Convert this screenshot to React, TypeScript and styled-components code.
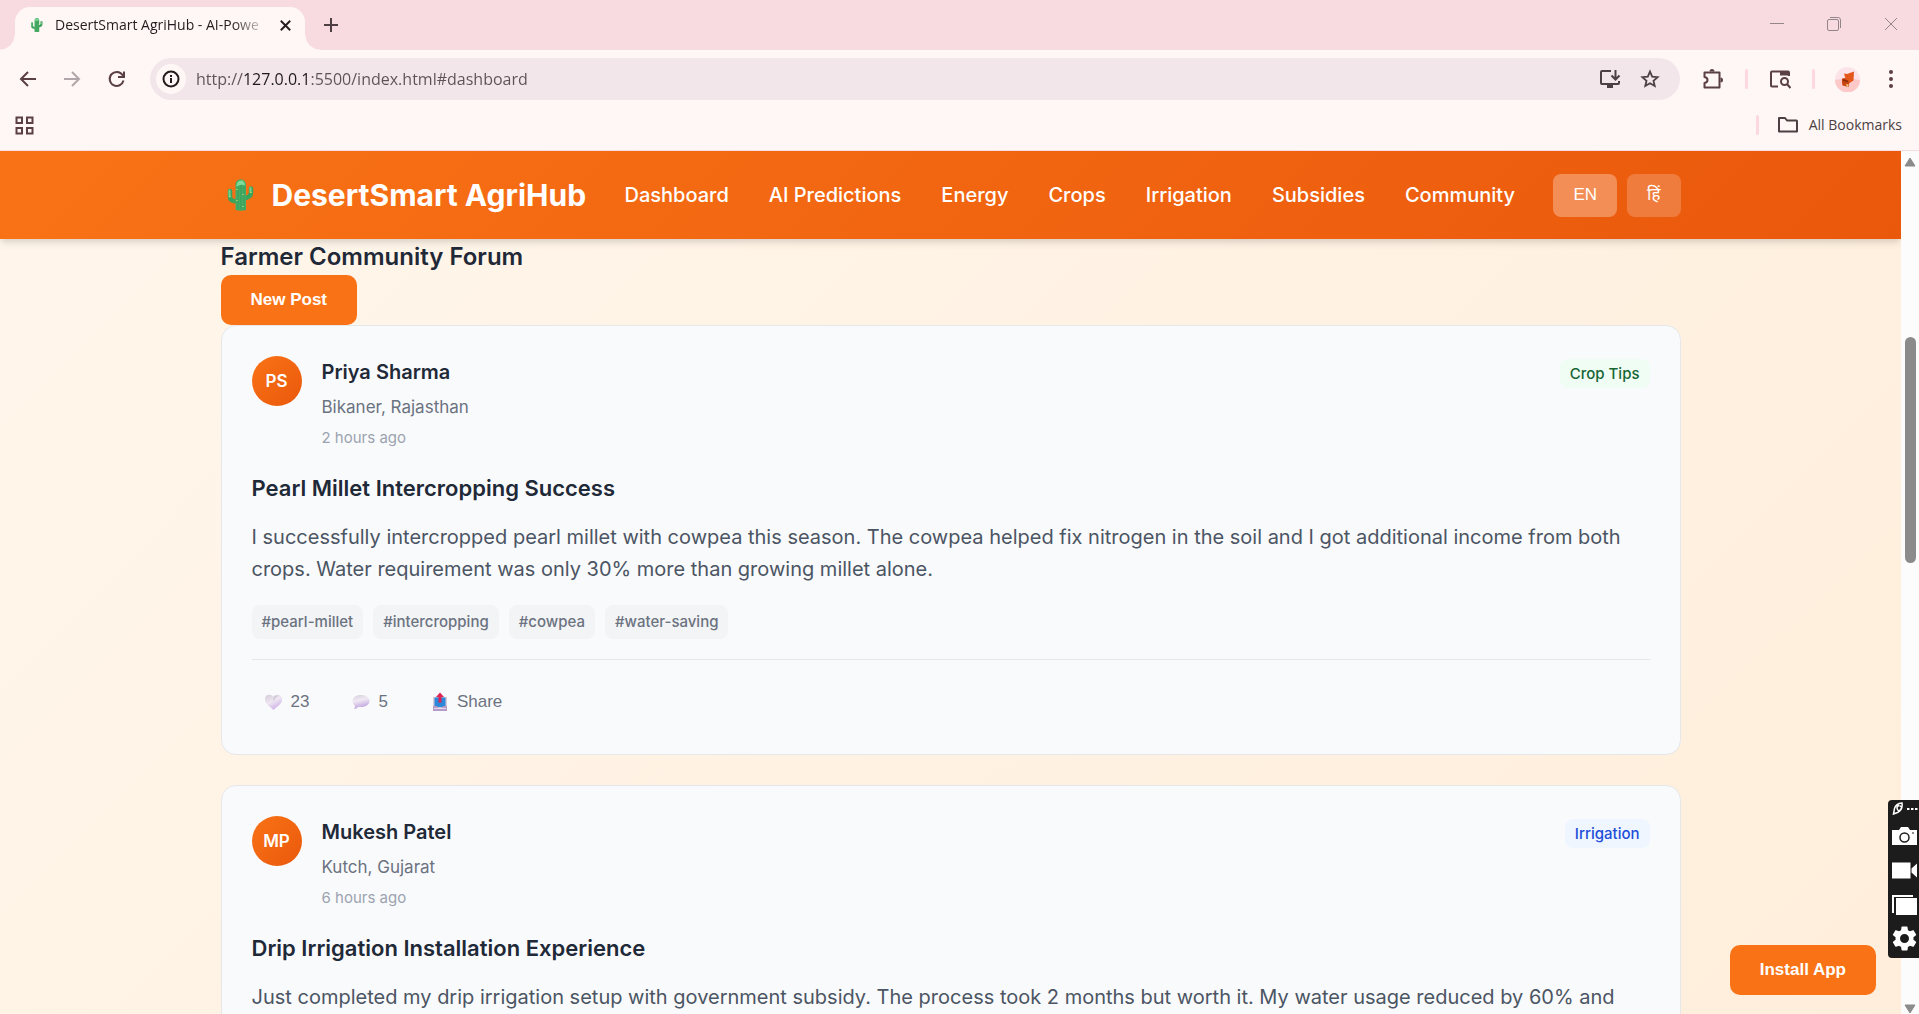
import React from "react";
import styled, { createGlobalStyle, css } from "styled-components";

const inter = `Inter, "Liberation Sans", sans-serif`;
const arial = `"Liberation Sans", Arial, "Noto Sans Devanagari", "Noto Sans", sans-serif`;
const ui = `"Open Sans", "Noto Sans", sans-serif`;

const GlobalStyle = createGlobalStyle`
  *, *::before, *::after { box-sizing: border-box; }
  body { margin: 0; overflow: hidden; font-family: ${inter}; }
  h1, h2, h3, p { margin: 0; }
  button { border: 0; cursor: pointer; }
  a { text-decoration: none; color: inherit; }
  svg { display: block; flex: none; }
`;

/* ---------- browser frame ---------- */

const Window = styled.div`
  display: flex;
  flex-direction: column;
  height: 100vh;
  background: #fff7f5;
`;

const TabStrip = styled.div`
  display: flex;
  align-items: flex-end;
  flex: none;
  height: 50px;
  padding-left: 15px;
  background: #f7dbe0;
`;

const Tab = styled.div`
  position: relative;
  display: flex;
  align-items: center;
  gap: 9px;
  width: 290px;
  height: 43px;
  padding: 0 8px 7px 13px;
  border-radius: 15px 15px 0 0;
  background: #fff7f5;

  &::before,
  &::after {
    content: "";
    position: absolute;
    bottom: 0;
    width: 15px;
    height: 15px;
  }
  &::before {
    right: 100%;
    background: radial-gradient(circle at 0 0, transparent 14px, #fff7f5 15px);
  }
  &::after {
    left: 100%;
    background: radial-gradient(circle at 100% 0, transparent 14px, #fff7f5 15px);
  }
`;

const TabTitle = styled.span`
  flex: 1;
  min-width: 0;
  overflow: hidden;
  white-space: nowrap;
  font: 14px/20px ${ui};
  color: #241b1e;
  mask-image: linear-gradient(90deg, #000 85%, transparent 102%);
`;

const PlainButton = styled.button<{ $w?: number; $h?: number; $color?: string }>`
  display: flex;
  align-items: center;
  justify-content: center;
  flex: none;
  width: ${(p) => p.$w ?? 44}px;
  height: ${(p) => p.$h ?? 42}px;
  padding: 0;
  background: none;
  color: ${(p) => p.$color ?? "#5a3f45"};
`;

const WindowControls = styled.div`
  display: flex;
  height: 50px;
  margin-left: auto;
`;

const Toolbar = styled.div`
  display: flex;
  align-items: center;
  flex: none;
  padding: 8px 6px;
`;

const Omnibox = styled.div`
  display: flex;
  align-items: center;
  flex: 1;
  height: 42px;
  margin: 0 11px 0 12px;
  padding: 0 10px 0 6px;
  border-radius: 21px;
  background: #f2e6eb;
`;

const SiteInfo = styled.button`
  display: flex;
  align-items: center;
  justify-content: center;
  width: 30px;
  height: 30px;
  padding: 0;
  border-radius: 50%;
  background: #fff7f5;
  color: #241b1e;
`;

const Address = styled.input`
  flex: 1;
  min-width: 0;
  margin-left: 10px;
  padding: 0;
  border: 0;
  outline: 0;
  font: 16px/24px ${ui};
  color: transparent;
  background: linear-gradient(90deg, #5f5156 47px, #1f1a1c 47px, #1f1a1c 112px, #5f5156 112px);
  background-clip: text;
`;

const Separator = styled.span`
  flex: none;
  width: 3px;
  height: 20px;
  margin: 0 10px;
  border-radius: 2px;
  background: #fdd8df;
`;

const Bookmarks = styled.div`
  display: flex;
  align-items: center;
  justify-content: space-between;
  flex: none;
  height: 43px;
  padding: 0 17px 8px 2px;
  border-bottom: 1px solid #f5dde1;
`;

const BookmarkGroup = styled.div`
  display: flex;
  align-items: center;
`;

const FolderButton = styled.button`
  display: flex;
  align-items: center;
  gap: 10px;
  padding: 0 0 0 8px;
  background: none;
  color: #4d3f43;
  font: 14px/20px ${ui};
`;

/* ---------- web page ---------- */

const Viewport = styled.div`
  display: flex;
  flex: 1;
  min-height: 0;
`;

const Page = styled.div`
  position: relative;
  flex: 1;
  min-width: 0;
  overflow: hidden;
  background: linear-gradient(135deg, #fff6eb, #ffeedb);
`;

const Container = styled.div`
  max-width: 1460px;
  margin: 0 auto;
`;

const Header = styled.header`
  position: relative;
  background: linear-gradient(135deg, #f97316, #ea580c);
  box-shadow: 0 5px 8px -1px rgba(0, 0, 0, 0.1), 0 3px 5px -1px rgba(0, 0, 0, 0.06);
`;

const HeaderInner = styled(Container)`
  display: flex;
  align-items: center;
  justify-content: space-between;
  height: 88px;
`;

const Brand = styled.h1`
  display: flex;
  align-items: center;
  gap: 11px;
  font: 700 30px/48px ${inter};
  color: #fff;
  white-space: nowrap;
`;

const Nav = styled.nav`
  display: flex;
  gap: 40px;
  font: 500 20px/32px ${inter};
  color: #fff;
  white-space: nowrap;
`;

const Languages = styled.div`
  display: flex;
  gap: 10px;
`;

const LangButton = styled.button<{ $active?: boolean }>`
  height: 43px;
  padding: 0 20px 1px;
  border-radius: 8px;
  background: rgba(255, 255, 255, ${(p) => (p.$active ? 0.3 : 0.2)});
  color: #fff;
  font: 17px/24px ${arial};
`;

const SectionTitle = styled.h2`
  font: 600 24px/36px ${inter};
  color: #1f2937;
`;

const primary = css`
  height: 50px;
  padding: 0 30px;
  border-radius: 10px;
  background: #f97316;
  color: #fff;
  font: 700 17px/20px ${arial};
  white-space: nowrap;
`;

const PrimaryButton = styled.button`
  display: block;
  ${primary}
`;

const InstallButton = styled.button`
  position: absolute;
  right: 25px;
  bottom: 19px;
  ${primary}
`;

const Posts = styled.div`
  display: flex;
  flex-direction: column;
  gap: 30px;
`;

const Card = styled.article`
  padding: 30px;
  border: 1px solid #e5e7eb;
  border-radius: 15px;
  background: #f9fafc;
`;

const PostHeader = styled.div`
  display: flex;
  align-items: flex-start;
  gap: 20px;
  margin-bottom: 20px;
`;

const Avatar = styled.div`
  display: flex;
  align-items: center;
  justify-content: center;
  flex: none;
  width: 50px;
  height: 50px;
  border-radius: 50%;
  background: linear-gradient(135deg, #f97316, #ea580c);
  color: #fff;
  font: 600 17px/24px ${inter};
`;

const Author = styled.div`
  display: flex;
  flex-direction: column;
  flex: 1;
  gap: 5px;
`;

const AuthorName = styled.h3`
  font: 600 20px/32px ${inter};
  color: #1f2937;
`;

const Place = styled.span`
  font: 17px/28px ${inter};
  color: #6b7280;
`;

const Time = styled.span`
  font: 15px/24px ${inter};
  color: #9ca3af;
`;

const BadgeLine = styled.div`
  display: flex;
  align-items: center;
  height: 35px;
`;

const Badge = styled.span<{ $bg: string; $color: string }>`
  padding: 3px 10px 2px;
  border-radius: 8px;
  background: ${(p) => p.$bg};
  color: ${(p) => p.$color};
  font: 500 15px/24px ${inter};
`;

const PostTitle = styled.h3`
  margin-bottom: 15px;
  font: 600 22px/36px ${inter};
  color: #1f2937;
`;

const PostText = styled.p`
  font: 20px/32px ${inter};
  color: #4b5563;
`;

const Tags = styled.div`
  display: flex;
  gap: 10px;
  margin: 20px 0;
`;

const Tag = styled.span`
  padding: 5px 10px;
  border-radius: 8px;
  background: #f3f4f6;
  color: #6b7280;
  font: 500 15px/24px ${inter};
`;

const Actions = styled.div`
  display: flex;
  gap: 20px;
  padding-top: 20px;
  border-top: 1px solid #e5e7eb;
`;

const ActionButton = styled.button`
  display: flex;
  align-items: center;
  gap: 5px;
  padding: 10px;
  background: none;
  color: #6b7280;
  font: 17px/24px ${arial};
`;

const Scrollbar = styled.div`
  display: flex;
  flex-direction: column;
  align-items: center;
  justify-content: space-between;
  width: 18px;
  padding: 6px 0 0;
  background: #fcfcfc;
`;

const Track = styled.div`
  flex: 1;
  width: 11px;
  padding-top: 170px;
`;

const Thumb = styled.div`
  height: 226px;
  border-radius: 6px;
  background: #8b8b8b;
`;

const CaptureBar = styled.div`
  position: fixed;
  right: 0;
  bottom: 56px;
  display: flex;
  flex-direction: column;
  align-items: center;
  gap: 9px;
  width: 31px;
  height: 158px;
  padding: 1px 0 0 2px;
  border-radius: 4px 0 0 4px;
  background: #1c1c1c;
`;

/* ---------- drawings ---------- */

const Cactus = ({ size }: { size: number }) => (
  <svg width={size} height={size} viewBox="2 0 40 40" aria-hidden="true">
    <path d="M11 16v6q0 4.500 8 4.500" fill="none" stroke="#3aa35c" strokeWidth="4.500" strokeLinecap="round" />
    <path d="M32 13.500v4q0 5-8 6" fill="none" stroke="#3aa35c" strokeWidth="4.500" strokeLinecap="round" />
    <path d="M10.500 15.500v6M31.500 13v4" fill="none" stroke="#74d08c" strokeWidth="2" strokeLinecap="round" />
    <path d="M16.500 35V9.500a5 5 0 0 1 10.500 0V35q-5 1.500-10.500 0z" fill="#46ad66" />
    <path d="M19 35V10M22 35V7M25 35V11" stroke="#2f9250" strokeWidth="1" opacity=".6" />
    <path d="M17.500 12q0-6.500 4.500-6.500 3.500 0 4 5-4.500-2-8.500 1.500z" fill="#7fdb95" />
    <path d="M18 14v1M24 19v1M18 25v1M24 31v1M11 21v1M32 17v1" stroke="#d0de70" strokeWidth="1.200" />
  </svg>
);

const stroke = { fill: "none", stroke: "currentColor" } as const;

const BackIcon = () => (
  <svg width="20" height="20" viewBox="0 0 20 20" {...stroke} strokeWidth="2"><path d="M18 10H3M10 3l-7 7 7 7" /></svg>
);
const ForwardIcon = () => (
  <svg width="20" height="20" viewBox="0 0 20 20" {...stroke} strokeWidth="2"><path d="M2 10h15M10 3l7 7-7 7" /></svg>
);
const ReloadIcon = () => (
  <svg width="20" height="20" viewBox="0 0 20 20" {...stroke} strokeWidth="2"><path d="M17.500 11.500A7 7 0 1 1 16.500 6L18 8M18 2.500V8h-6" /></svg>
);
const InfoIcon = () => (
  <svg width="18" height="18" viewBox="0 0 18 18" {...stroke} strokeWidth="2"><circle cx="9" cy="9" r="7.500" /><path d="M9 8v5M9 5v2" /></svg>
);
const InstallIcon = () => (
  <svg width="22" height="20" viewBox="0 0 22 20" {...stroke} strokeWidth="2"><path d="M12 2H3q-1 0-1 1v11q0 1 1 1h16q1 0 1-1v-2M16.500 1v9M12.500 6.500l4 4 4-4" /><path d="M8 17.500h6" strokeWidth="3" /></svg>
);
const StarIcon = () => (
  <svg width="20" height="20" viewBox="0 0 20 20" {...stroke} strokeWidth="1.800"><path d="M10 2.600l2.200 5 5.400.5-4.100 3.600 1.200 5.300L10 14.200 5.300 17l1.200-5.300L2.400 8.100l5.400-.5z" /></svg>
);
const PuzzleIcon = () => (
  <svg width="22" height="22" viewBox="0 0 22 22" {...stroke} strokeWidth="2">
    <path d="M2.500 4.500h15v15h-15v-4.500q3-.5 3-3t-3-3z" strokeLinejoin="round" />
    <path d="M7.500 3.500a2.500 2.500 0 0 1 5 0zM18.500 9.500a2.500 2.500 0 0 1 0 5z" fill="currentColor" stroke="none" />
  </svg>
);
const LensIcon = () => (
  <svg width="22" height="20" viewBox="0 0 22 20" {...stroke} strokeWidth="2">
    <path d="M9 17.500H3q-1 0-1-1V3.500q0-1 1-1h16q1 0 1 1V7" /><path d="M11 2h9v4.500h-9z" fill="currentColor" stroke="none" />
    <circle cx="15.500" cy="12.500" r="3.500" /><path d="M18 15l3.500 4" />
  </svg>
);
const ProfileIcon = () => (
  <svg width="25" height="25" viewBox="0 0 25 25">
    <circle cx="12.500" cy="12.500" r="12.500" fill="#fbe3e9" /><path d="M0 13q12-3 25 0a12.500 12.500 0 0 1-25 0z" fill="#fcc9c8" />
    <path d="M9 6.500l3 .5 7-2.500-.5 9-4 2.500-4-4z" fill="#e4561a" /><path d="M7 11.500l3-.5 4.500 4-1 5-6-1.500-.5-3z" fill="#c8440f" /><path d="M8 13l5 1.500" stroke="#8a2a0c" strokeWidth="1.500" /><path d="M10.500 17.500l3-.5-.5 3.500z" fill="#edc07a" />
  </svg>
);
const DotsIcon = () => (
  <svg width="6" height="20" viewBox="0 0 6 20" fill="currentColor"><circle cx="3" cy="3" r="2" /><circle cx="3" cy="10" r="2" /><circle cx="3" cy="17" r="2" /></svg>
);
const AppsIcon = () => (
  <svg width="19" height="19" viewBox="0 0 19 19" {...stroke} strokeWidth="2"><path d="M1.500 1.500h5.500v5.500h-5.500zM12 1.500h5.500v5.500h-5.500zM1.500 12h5.500v5.500h-5.500zM12 12h5.500v5.500h-5.500z" /></svg>
);
const FolderIcon = () => (
  <svg width="22" height="18" viewBox="0 0 22 18" {...stroke} strokeWidth="2" strokeLinejoin="round"><path d="M2 2h6l2 2.500h9.500q.5 0 .5.500v10.500H2z" /></svg>
);
const CrossIcon = ({ size, width }: { size: number; width: number }) => (
  <svg width={size} height={size} viewBox="0 0 14 14" {...stroke} strokeWidth={width}><path d="M1 1l12 12M13 1L1 13" /></svg>
);
const PlusIcon = () => (
  <svg width="14" height="14" viewBox="0 0 14 14" {...stroke} strokeWidth="2"><path d="M7 0v14M0 7h14" /></svg>
);
const MinimizeIcon = () => (
  <svg width="14" height="14" viewBox="0 0 14 14" {...stroke} strokeWidth="1"><path d="M0 6.500h14" /></svg>
);
const RestoreIcon = () => (
  <svg width="14" height="14" viewBox="0 0 14 14" {...stroke} strokeWidth="1"><rect x=".5" y="2.500" width="11" height="11" rx="1.500" /><path d="M3 .5h8q2.500 0 2.500 2.500v8" /></svg>
);

const HeartIcon = () => (
  <svg width="24" height="24" viewBox="0 0 24 24" aria-hidden="true">
    <defs>
      <linearGradient id="heart" x1="0" y1="0" x2=".6" y2="1"><stop offset="0" stopColor="#d3ccd8" /><stop offset=".5" stopColor="#efe8f3" /><stop offset="1" stopColor="#cdaee6" /></linearGradient>
    </defs>
    <path d="M11.500 7C10 4 3 3.500 3 9.500c0 5 6 7.500 8.500 10.500 2.500-3 8.500-5.500 8.500-10.500C20 3.500 13 4 11.500 7z" fill="url(#heart)" />
    <path d="M11.500 7c-.5 2-.5 3 0 5 1.500-4 3-5 5-6-2-.7-4-.5-5 1z" fill="#c5bccb" opacity=".6" />
  </svg>
);
const CommentIcon = () => (
  <svg width="24" height="24" viewBox="0 0 24 24" aria-hidden="true">
    <defs>
      <linearGradient id="bubble" x1="0" y1="0" x2=".3" y2="1"><stop offset="0" stopColor="#d5cdda" /><stop offset=".45" stopColor="#f1eaf4" /><stop offset="1" stopColor="#bfa3dc" /></linearGradient>
    </defs>
    <path d="M12 5c5 0 8.500 2.700 8.500 6S17 17 12 17q-1.500 0-2.800-.3Q8 19 5 19q1-1.300.9-3.500-2.400-1.500-2.400-4.500C3.500 7.700 7 5 12 5z" fill="url(#bubble)" />
  </svg>
);
const ShareIcon = () => (
  <svg width="24" height="24" viewBox="0 0 24 24" aria-hidden="true">
    <path d="M5 7h14v14H5z" fill="#d5cbdc" /><path d="M6.500 7.500h11V17h-11z" fill="#2b87d8" />
    <path d="M5 16h4q1 2 3 2t3-2h4v5H5z" fill="#b49bca" /><path d="M6 18h12v1H6z" fill="#e4d9ea" />
    <path d="M12 2.500l4 4.500h-2.500v5.500h-3V7H8z" fill="#de2452" />
  </svg>
);

const RocketIcon = () => (
  <svg width="26" height="14" viewBox="0 0 26 14" {...stroke} stroke="#fff">
    <path d="M1.500 13l1-5.500Q4 2.500 10 2 11 9 5.500 11.500zM7 4.500q-3 1-1.500 4T9.500 7M7.500 4.500l2 1.500" strokeWidth="1.500" />
    <path d="M15 8h2.500M19 8h2.500M23 8h2.500" strokeWidth="2" />
  </svg>
);
const CameraIcon = () => (
  <svg width="25" height="19" viewBox="0 0 25 19"><path d="M0 3h7l2-3h7l2 3h7v15H0z" fill="#fff" /><circle cx="12.500" cy="10.500" r="4.500" fill="#fff" stroke="#1c1c1c" strokeWidth="1.500" /><path d="M20 6h2" stroke="#1c1c1c" /></svg>
);
const VideoIcon = () => (
  <svg width="25" height="17" viewBox="0 0 25 17"><path d="M0 .5h18.500v16H0zM19.500 6.500L25 1.500v14l-5.500-5z" fill="#fff" /></svg>
);
const StackIcon = () => (
  <svg width="25" height="20" viewBox="0 0 25 20"><path d="M0 0h21v2H2v16H0z" fill="#fff" /><path d="M4 3h21v17H4z" fill="#fff" /></svg>
);
const GearIcon = () => (
  <svg width="25" height="25" viewBox="2 2 20 20" fill="#fff"><path d="M19.140 12.940c.04-.3.060-.61.060-.94s-.02-.64-.07-.94l2.030-1.580a.49.49 0 0 0 .12-.61l-1.920-3.320a.49.49 0 0 0-.59-.22l-2.390.96a7 7 0 0 0-1.620-.94l-.36-2.540a.48.48 0 0 0-.48-.41h-3.840a.48.48 0 0 0-.47.41l-.36 2.540a7.400 7.400 0 0 0-1.620.94l-2.390-.96a.48.48 0 0 0-.59.22L2.740 8.870a.48.48 0 0 0 .12.610l2.030 1.580a6 6 0 0 0 0 1.880l-2.030 1.580a.49.49 0 0 0-.12.610l1.920 3.320c.12.220.37.290.59.220l2.390-.96c.5.380 1.030.7 1.620.94l.36 2.540c.05.240.24.410.48.410h3.840c.24 0 .44-.17.470-.41l.36-2.540a7.400 7.400 0 0 0 1.620-.94l2.390.96c.22.080.47 0 .59-.22l1.920-3.320a.48.48 0 0 0-.12-.61zM12 15.600a3.600 3.600 0 1 1 0-7.200 3.600 3.600 0 0 1 0 7.200z" /></svg>
);
const Arrow = ({ down }: { down?: boolean }) => (
  <svg width="12" height="10" viewBox="0 0 12 10"><path d={down ? "M1 1h10L6 9z" : "M1 9h10L6 1z"} fill="#8b8b8b" stroke="#8b8b8b" strokeLinejoin="round" /></svg>
);

/* ---------- content ---------- */

interface Post {
  initials: string;
  name: string;
  place: string;
  time: string;
  topic: string;
  topicBg: string;
  topicColor: string;
  title: string;
  text: string;
  tags: string[];
  likes?: number;
  replies?: number;
}

const posts: Post[] = [
  {
    initials: "PS",
    name: "Priya Sharma",
    place: "Bikaner, Rajasthan",
    time: "2 hours ago",
    topic: "Crop Tips",
    topicBg: "#f0fdf4",
    topicColor: "#166534",
    title: "Pearl Millet Intercropping Success",
    text: "I successfully intercropped pearl millet with cowpea this season. The cowpea helped fix nitrogen in the soil and I got additional income from both crops. Water requirement was only 30% more than growing millet alone.",
    tags: ["#pearl-millet", "#intercropping", "#cowpea", "#water-saving"],
    likes: 23,
    replies: 5,
  },
  {
    initials: "MP",
    name: "Mukesh Patel",
    place: "Kutch, Gujarat",
    time: "6 hours ago",
    topic: "Irrigation",
    topicBg: "#eff6ff",
    topicColor: "#1d4ed8",
    title: "Drip Irrigation Installation Experience",
    text: "Just completed my drip irrigation setup with government subsidy. The process took 2 months but worth it. My water usage reduced by 60% and",
    tags: [],
  },
];

const links = ["Dashboard", "AI Predictions", "Energy", "Crops", "Irrigation", "Subsidies", "Community"];

const PostCard = ({ post }: { post: Post }) => (
  <Card>
    <PostHeader>
      <Avatar>{post.initials}</Avatar>
      <Author>
        <AuthorName>{post.name}</AuthorName>
        <Place>{post.place}</Place>
        <Time>{post.time}</Time>
      </Author>
      <BadgeLine>
        <Badge $bg={post.topicBg} $color={post.topicColor}>{post.topic}</Badge>
      </BadgeLine>
    </PostHeader>
    <PostTitle>{post.title}</PostTitle>
    <PostText>{post.text}</PostText>
    {post.tags.length > 0 && (
      <Tags>{post.tags.map((tag) => <Tag key={tag}>{tag}</Tag>)}</Tags>
    )}
    {post.likes !== undefined && (
      <Actions>
        <ActionButton><HeartIcon />{post.likes}</ActionButton>
        <ActionButton><CommentIcon />{post.replies}</ActionButton>
        <ActionButton><ShareIcon />Share</ActionButton>
      </Actions>
    )}
  </Card>
);

export default function App() {
  return (
    <>
      <GlobalStyle />
      <Window>
        <TabStrip>
          <Tab>
            <Cactus size={18} />
            <TabTitle>DesertSmart AgriHub - AI-Powe</TabTitle>
            <PlainButton $w={24} $h={24} $color="#241b1e" aria-label="Close tab"><CrossIcon size={11} width={2.4} /></PlainButton>
          </Tab>
          <PlainButton $w={52} $h={50} $color="#4d3f43" aria-label="New tab"><PlusIcon /></PlainButton>
          <WindowControls>
            <PlainButton $w={57} $h={48} $color="#94858a" aria-label="Minimize"><MinimizeIcon /></PlainButton>
            <PlainButton $w={57} $h={48} $color="#94858a" aria-label="Restore"><RestoreIcon /></PlainButton>
            <PlainButton $w={57} $h={48} $color="#94858a" aria-label="Close"><CrossIcon size={14} width={1} /></PlainButton>
          </WindowControls>
        </TabStrip>
        <Toolbar>
          <PlainButton aria-label="Back"><BackIcon /></PlainButton>
          <PlainButton $color="#b3a6aa" aria-label="Forward"><ForwardIcon /></PlainButton>
          <PlainButton aria-label="Reload"><ReloadIcon /></PlainButton>
          <Omnibox>
            <SiteInfo aria-label="Site information"><InfoIcon /></SiteInfo>
            <Address aria-label="Address" defaultValue="http://127.0.0.1:5500/index.html#dashboard" spellCheck={false} />
            <PlainButton $w={40} $color="#4d3f43" aria-label="Install"><InstallIcon /></PlainButton>
            <PlainButton $w={40} $color="#4d3f43" aria-label="Bookmark"><StarIcon /></PlainButton>
          </Omnibox>
          <PlainButton aria-label="Extensions"><PuzzleIcon /></PlainButton>
          <Separator />
          <PlainButton aria-label="Search page"><LensIcon /></PlainButton>
          <Separator />
          <PlainButton aria-label="Profile"><ProfileIcon /></PlainButton>
          <PlainButton aria-label="Menu"><DotsIcon /></PlainButton>
        </Toolbar>
        <Bookmarks>
          <PlainButton $h={32} aria-label="Apps"><AppsIcon /></PlainButton>
          <BookmarkGroup>
            <Separator />
            <FolderButton><FolderIcon />All Bookmarks</FolderButton>
          </BookmarkGroup>
        </Bookmarks>
        <Viewport>
          <Page>
            <Header>
              <HeaderInner>
                <Brand><Cactus size={40} />DesertSmart AgriHub</Brand>
                <Nav>
                  {links.map((link) => (
                    <a key={link} href={`#${link.toLowerCase().replace(" ", "-")}`}>{link}</a>
                  ))}
                </Nav>
                <Languages>
                  <LangButton $active>EN</LangButton>
                  <LangButton lang="hi">हिं</LangButton>
                </Languages>
              </HeaderInner>
            </Header>
            <Container as="main">
              <SectionTitle>Farmer Community Forum</SectionTitle>
              <PrimaryButton>New Post</PrimaryButton>
              <Posts>
                {posts.map((post) => <PostCard key={post.name} post={post} />)}
              </Posts>
            </Container>
            <InstallButton>Install App</InstallButton>
          </Page>
          <Scrollbar aria-hidden="true">
            <Arrow />
            <Track><Thumb /></Track>
            <Arrow down />
          </Scrollbar>
        </Viewport>
      </Window>
      <CaptureBar>
        <RocketIcon />
        <PlainButton $w={25} $h={25} aria-label="Take screenshot"><CameraIcon /></PlainButton>
        <PlainButton $w={25} $h={25} aria-label="Record video"><VideoIcon /></PlainButton>
        <PlainButton $w={25} $h={25} aria-label="Open captures"><StackIcon /></PlainButton>
        <PlainButton $w={25} $h={25} aria-label="Settings"><GearIcon /></PlainButton>
      </CaptureBar>
    </>
  );
}
